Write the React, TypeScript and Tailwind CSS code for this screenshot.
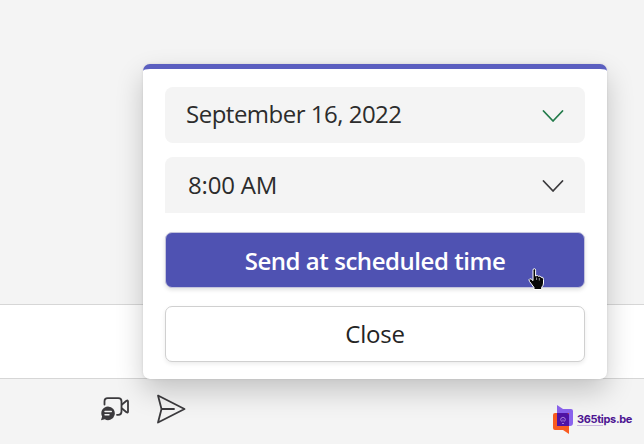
type FieldProps = {
  value: string;
  className: string;
  textClassName: string;
  chevronClassName: string;
};

function Field({ value, className, textClassName, chevronClassName }: FieldProps) {
  return (
    <button className={`flex h-14 w-full items-center justify-between bg-[#f4f4f4] pr-5 text-left ${className}`}>
      <span className={`whitespace-nowrap text-2xl text-[#2c2c2c] ${textClassName}`}>{value}</span>
      <svg className={`mt-0.5 h-4 w-6 ${chevronClassName}`} viewBox="0 0 24 16" fill="none" stroke="currentColor" strokeWidth="1.8" strokeLinecap="round" strokeLinejoin="round">
        <path d="M2.5 3 12 13 21.5 3" />
      </svg>
    </button>
  );
}

function VideoClipIcon() {
  return (
    <svg className="h-6 w-[30px]" viewBox="0 0 30 24" fill="none" stroke="#3b3a3d" strokeWidth="1.8" strokeLinecap="round" strokeLinejoin="round">
      <path d="M4.5 7.5V4.5Q4.500 1.200 7.700 1.200H18.300Q21.500 1.200 21.500 4.500V14.500Q21.500 17.800 18.300 17.800H17" />
      <path d="M22 7.500 26.500 3.700Q28 2.800 28 4.500V14.500Q28 16.200 26.500 15.300L22 11.500" />
      <path d="M8 9.500A6.800 6.800 0 1 1 4.800 22.300L1 23.200 2.100 19.500A6.800 6.800 0 0 1 8 9.500Z" fill="#3b3a3d" stroke="none" />
      <path d="M5 14.500H11.300M5 17.800H9" stroke="#f4f4f4" strokeWidth="1.4" />
    </svg>
  );
}

function SendIcon() {
  return (
    <svg className="h-[30px] w-[30px]" viewBox="0 0 30 30" fill="none" stroke="#3b3a3d" strokeWidth="1.8" strokeLinecap="round" strokeLinejoin="round">
      <path d="M2 1.500 28.500 15 2 28.500 5.500 15ZM5.500 15H18" />
    </svg>
  );
}

function HandCursor() {
  return (
    <svg className="absolute top-[199px] left-[385px] h-[23px] w-[17px]" viewBox="0 0 17 23">
      <path
        d="M5 2.200Q5 .7 6.300 .7Q7.600 .7 7.600 2.200V8Q9.700 6.600 10.300 8.300Q12.200 7.300 12.900 9.200Q15.500 8.500 15.500 11.400V15Q15.500 17.500 13.700 19.300V21.500H6V19.500L1.500 13.400Q.3 11.300 1.800 10.800Q3 10.400 5 12.600Z"
        fill="#080808"
        stroke="white"
        strokeWidth="1"
        strokeLinejoin="round"
      />
      <path d="M8.600 9.500V12M11.300 10V12.500" stroke="white" strokeWidth=".6" />
    </svg>
  );
}

function Logo() {
  return (
    <div className="flex items-center gap-[3px]">
      <svg className="h-[31px] w-[22px]" viewBox="0 0 22 31">
        <path d="M5 1 11 5H19Q21 5 21 7V19Q21 22 18 22H5Z" fill="#8b63ee" />
        <path d="M3 9H17V30L11 26H3Q1 26 1 24V11Q1 9 3 9Z" fill="#fa5b20" />
        <path d="M5 9H15Q17 9 17 11V22H5Z" fill="#5013a5" />
        <path d="M9.500 17.500Q8 15.500 9.200 14Q11 12.500 12.800 14Q14 15.500 12.500 17.500M10 19.500H12M11 15.500V17.500" stroke="#c8a9ec" strokeWidth=".7" fill="none" />
      </svg>
      <div className="flex flex-col pt-px">
        <span className="font-['Inter','Liberation_Sans',sans-serif] text-[11px] leading-[11px] font-bold tracking-[-0.35px] text-[#4d1592]">365tips.be</span>
        <div className="h-px w-[26px] bg-[#c9b6e0]"></div>
      </div>
    </div>
  );
}

export default function App() {
  return (
    <div className="relative flex h-[444px] w-[644px] flex-col overflow-hidden bg-[#f4f4f4] font-['Open_Sans','Noto_Sans',sans-serif]">
      <div className="flex-1"></div>
      <div className="h-[75px] border-y border-[#d6d6d6] bg-white"></div>
      <div className="flex h-[65px] justify-between pr-3 pl-[100px]">
        <div className="flex items-start gap-[26px] pt-[15px]">
          <div className="pt-[3px]">
            <VideoClipIcon />
          </div>
          <SendIcon />
        </div>
        <div className="pt-[25px]">
          <Logo />
        </div>
      </div>

      {/* schedule send dialog */}
      <div className="absolute top-16 left-[143px] flex h-[315px] w-[464px] flex-col rounded-[7px] border-t-[5px] border-[#5b5fc0] bg-white px-[22px] pt-[18px] shadow-[0_12px_28px_rgba(0,0,0,0.2),0_0_3px_rgba(0,0,0,0.1)]">
        <Field value="September 16, 2022" className="rounded-lg pl-[21px]" textClassName="pb-0.5 tracking-[-0.5px]" chevronClassName="text-[#237b4b]" />
        <Field value="8:00 AM" className="mt-3.5 rounded-t-lg pl-[23px]" textClassName="tracking-[-0.2px]" chevronClassName="text-[#3b3a3d]" />
        <button className="mt-[19px] h-14 shrink-0 rounded-[7px] border border-[#c4c4dc] bg-[#4f52b2] pt-0.5 text-2xl font-semibold tracking-[-0.45px] text-white shadow-[0_2px_4px_rgba(0,0,0,0.12)]">
          Send at scheduled time
        </button>
        <button className="mt-[18px] h-14 shrink-0 rounded-[7px] border border-[#d0d0d0] bg-white text-2xl font-medium tracking-[-0.2px] text-[#242424] shadow-[0_2px_4px_rgba(0,0,0,0.08)]">
          Close
        </button>
        <HandCursor />
      </div>
    </div>
  );
}
